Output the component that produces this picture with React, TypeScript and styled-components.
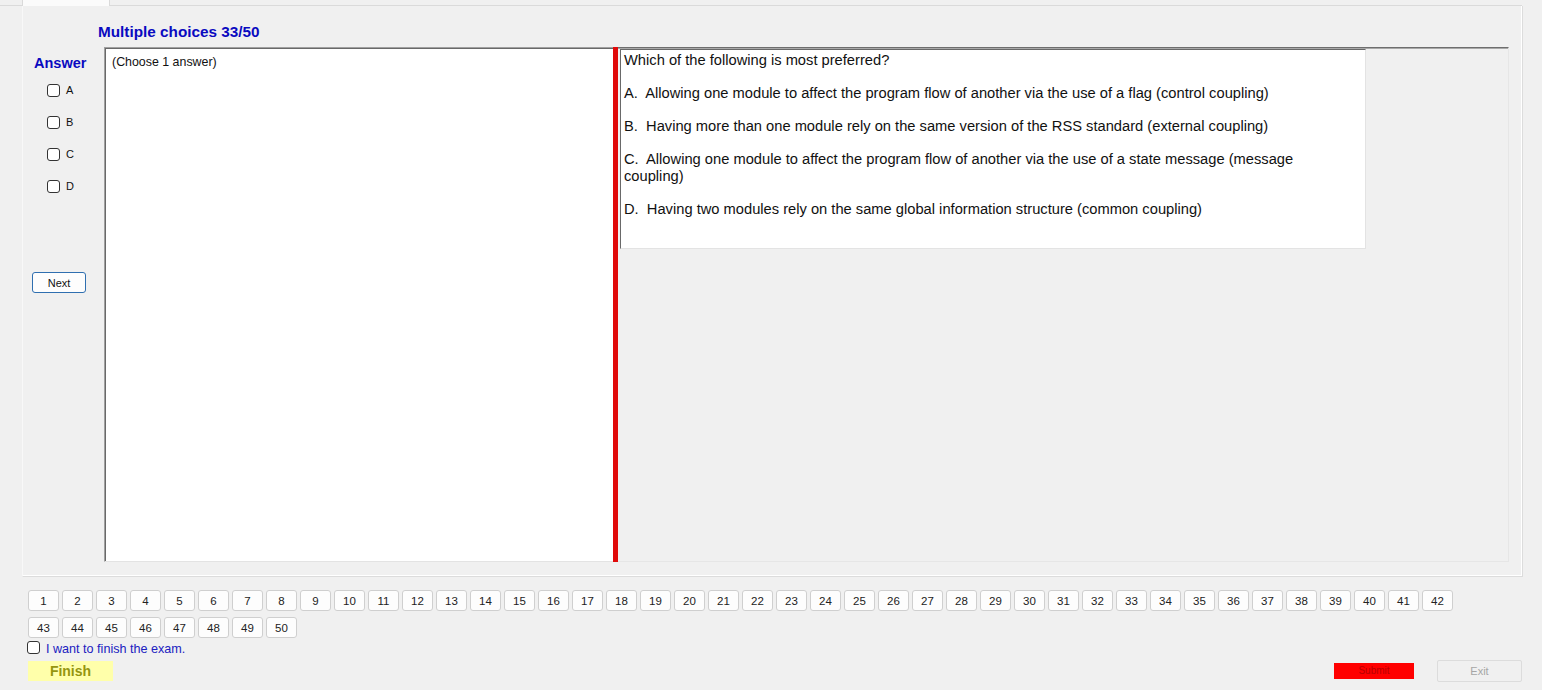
import React from "react";
import styled, { createGlobalStyle } from "styled-components";

const GlobalStyle = createGlobalStyle`
  html, body { margin: 0; padding: 0; background: #f0f0f0; }
  body { font-family: "Liberation Sans", Arial, sans-serif; }
  * { box-sizing: border-box; }
`;

const Page = styled.div`
  width: 1542px;
  height: 690px;
  overflow: hidden;
  background: #f0f0f0;
  font-family: "Liberation Sans", Arial, sans-serif;
  color: #000;
`;

const TabStrip = styled.div`
  height: 6px;
  display: flex;
  border-bottom: 1px solid #dadada;
  width: 1522px;
`;

const TabHeader = styled.div`
  margin-left: 22px;
  width: 88px;
  height: 6px;
  background: #fbfbfb;
  border-left: 1px solid #dadada;
  border-right: 1px solid #dadada;
`;

const TabPage = styled.div`
  margin-left: 22px;
  width: 1501px;
  height: 571px;
  background: #f0f0f0;
  border-left: 1px solid #f8f8f8;
  border-right: 1px solid #dcdcdc;
  border-bottom: 1px solid #dcdcdc;
  box-shadow: inset -1px -1px 0 #ffffff;
  display: flex;
  flex-direction: column;
`;

const Title = styled.div`
  height: 41px;
  padding-top: 17px;
  padding-left: 75px;
  font-size: 15.3px;
  line-height: 17px;
  font-weight: bold;
  color: #0a0ac0;
`;

const Body = styled.div`
  display: flex;
  height: 515px;
`;

const AnswerColumn = styled.div`
  width: 81px;
  display: flex;
  flex-direction: column;
`;

const AnswerLabel = styled.div`
  margin-top: 8px;
  margin-left: 11px;
  font-size: 14.5px;
  line-height: 17px;
  font-weight: bold;
  color: #0a0ac0;
`;

const OptionList = styled.div`
  margin-top: 2px;
  display: flex;
  flex-direction: column;
`;

const OptionRow = styled.label`
  height: 32px;
  display: flex;
  align-items: center;
  padding-left: 24px;
  gap: 6px;
  font-size: 11px;
  color: #111;
`;

const CheckBox = styled.span`
  width: 13px;
  height: 13px;
  border: 1px solid #333;
  border-radius: 3px;
  background: #fff;
  flex: none;
`;

const NextButton = styled.button`
  margin-top: 70px;
  margin-left: 9px;
  width: 54px;
  height: 21px;
  padding: 0;
  border: 1px solid #2f6fb0;
  border-radius: 3px;
  background: #fdfdfd;
  font-family: "Liberation Sans", Arial, sans-serif;
  font-size: 11px;
  color: #111;
`;

const HintBox = styled.div`
  width: 509px;
  height: 515px;
  background: #fff;
  border-left: 1px solid #a0a0a0;
  border-top: 1px solid #a0a0a0;
  border-bottom: 1px solid #e3e3e3;
  box-shadow: inset 1px 1px 0 #696969;
  padding: 7px 0 0 7px;
  font-size: 12.4px;
  line-height: 15px;
  color: #111;
`;

const Splitter = styled.div`
  width: 5px;
  height: 515px;
  background: #e00a0a;
  flex: none;
`;

const QuestionPanel = styled.div`
  width: 891px;
  height: 515px;
  border-top: 1px solid #6e6e6e;
  border-right: 1px solid #e6e6e6;
  border-bottom: 1px solid #e6e6e6;
  box-shadow: inset 0 1px 0 #a8a8a8;
  padding: 1px 0 0 2px;
`;

const QuestionBox = styled.div`
  width: 746px;
  height: 200px;
  background: #fff;
  border-left: 1px solid #696969;
  border-top: 1px solid #696969;
  border-right: 1px solid #e3e3e3;
  border-bottom: 1px solid #e3e3e3;
  padding: 2px 30px 0 3px;
  font-size: 14.7px;
  line-height: 17px;
  color: #111;
`;

const Para = styled.p`
  margin: 0 0 16px 0;
  white-space: pre-wrap;
`;

const Footer = styled.div`
  padding-top: 13px;
  display: flex;
  flex-direction: column;
`;

const NumberGrid = styled.div`
  margin-left: 28px;
  display: grid;
  grid-template-columns: repeat(42, 31px);
  column-gap: 3px;
  row-gap: 6px;
`;

const NumButton = styled.button`
  width: 31px;
  height: 21px;
  padding: 0;
  background: #fdfdfd;
  border: 1px solid #cfcfcf;
  border-radius: 3px;
  font-family: "Liberation Sans", Arial, sans-serif;
  font-size: 11.5px;
  color: #222;
`;

const FinishCheck = styled.label`
  margin-top: 2px;
  margin-left: 27px;
  height: 14px;
  display: flex;
  align-items: center;
  gap: 6px;
  font-size: 12.6px;
  color: #2020c0;
`;

const FinishText = styled.span`
  padding-top: 3px;
`;

const ActionRow = styled.div`
  margin-top: 5px;
  height: 23px;
  display: flex;
  align-items: center;
  padding-left: 28px;
  padding-right: 20px;
`;

const FinishButton = styled.button`
  width: 85px;
  height: 20px;
  padding: 0;
  border: none;
  background: #ffffaa;
  font-family: "Liberation Sans", Arial, sans-serif;
  font-size: 14px;
  font-weight: bold;
  color: #959510;
`;

const SubmitButton = styled.button`
  margin-left: auto;
  width: 80px;
  height: 16px;
  padding: 0;
  border: none;
  background: #ff0000;
  font-family: "Liberation Sans", Arial, sans-serif;
  font-size: 10px;
  color: #b80000;
`;

const ExitButton = styled.button`
  margin-left: 23px;
  width: 85px;
  height: 22px;
  padding: 0;
  border: 1px solid #dcdcdc;
  border-radius: 2px;
  background: #f0f0f0;
  font-family: "Liberation Sans", Arial, sans-serif;
  font-size: 11px;
  color: #a6a6a6;
`;

const options = ["A", "B", "C", "D"];

const paragraphs = [
  "Which of the following is most preferred?",
  "A.\u00a0 Allowing one module to affect the program flow of another via the use of a flag (control coupling)",
  "B.\u00a0 Having more than one module rely on the same version of the RSS standard (external coupling)",
  "C.\u00a0 Allowing one module to affect the program flow of another via the use of a state message (message coupling)",
  "D.\u00a0 Having two modules rely on the same global information structure (common coupling)",
];

const numbers = Array.from({ length: 50 }, (_, i) => i + 1);

export default function App() {
  return (
    <Page>
      <GlobalStyle />
      <TabStrip>
        <TabHeader />
      </TabStrip>
      <TabPage>
        <Title>Multiple choices 33/50</Title>
        <Body>
          <AnswerColumn>
            <AnswerLabel>Answer</AnswerLabel>
            <OptionList>
              {options.map((o) => (
                <OptionRow key={o}>
                  <CheckBox />
                  {o}
                </OptionRow>
              ))}
            </OptionList>
            <NextButton>Next</NextButton>
          </AnswerColumn>
          <HintBox>(Choose 1 answer)</HintBox>
          <Splitter />
          <QuestionPanel>
            <QuestionBox>
              {paragraphs.map((p, i) => (
                <Para key={i}>{p}</Para>
              ))}
            </QuestionBox>
          </QuestionPanel>
        </Body>
      </TabPage>
      <Footer>
        <NumberGrid>
          {numbers.map((n) => (
            <NumButton key={n}>{n}</NumButton>
          ))}
        </NumberGrid>
        <FinishCheck>
          <CheckBox />
          <FinishText>I want to finish the exam.</FinishText>
        </FinishCheck>
        <ActionRow>
          <FinishButton>Finish</FinishButton>
          <SubmitButton>Submit</SubmitButton>
          <ExitButton>Exit</ExitButton>
        </ActionRow>
      </Footer>
    </Page>
  );
}
